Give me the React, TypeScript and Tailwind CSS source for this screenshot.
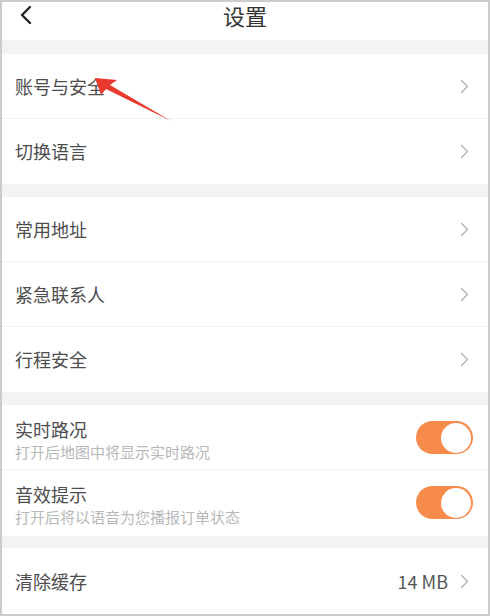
import React from 'react';

const font = { fontFamily: '"Noto Sans CJK SC", "Noto Sans", sans-serif' };

function Chevron() {
    return (
        <svg width="9" height="15" viewBox="0 0 9 15" className="shrink-0">
            <polyline points="1.5,1.5 7.5,7.5 1.5,13.5" fill="none" stroke="#adadad" strokeWidth="1.3" strokeLinecap="round" strokeLinejoin="round" />
        </svg>
    );
}

function Toggle() {
    return (
        <div className="w-[57px] h-[33px] rounded-full bg-[#f68b4c] flex items-center justify-end pr-[2px] shrink-0">
            <div className="w-[30px] h-[30px] rounded-full bg-white" />
        </div>
    );
}

function LinkRow({ label, value, last }: { label: string; value?: string; last?: boolean }) {
    return (
        <div className={`h-[65px] flex items-center pl-[13px] pr-[19px] bg-white ${last ? '' : 'border-b border-[#f1f1f1]'}`}>
            <span className="flex-1 text-[18px] text-[#4d4d4d]">{label}</span>
            {value && <span className="text-[18px] text-[#555] mr-[12px]">{value}</span>}
            <Chevron />
        </div>
    );
}

function ToggleRow({ title, desc, last }: { title: string; desc: string; last?: boolean }) {
    return (
        <div className={`flex items-start pl-[13px] pr-[15px] bg-white ${last ? 'h-[66px]' : 'h-[65px] border-b border-[#f1f1f1]'}`}>
            <div className="flex-1 pt-[12px]">
                <div className="text-[18px] leading-6 text-[#4d4d4d]">{title}</div>
                <div className="text-[15px] leading-5 mt-[1px] text-[#b8b8b8]">{desc}</div>
            </div>
            <div className="pt-[16px]">
                <Toggle />
            </div>
        </div>
    );
}

export default function App() {
    return (
        <div className="relative w-[490px] h-[616px] border-2 border-[#cccccc] bg-[#f2f3f5] overflow-hidden" style={font}>
            <div className="h-[38px] bg-white relative flex justify-center">
                <svg width="16" height="20" viewBox="0 0 16 20" className="absolute left-[17px] top-[3px]">
                    <polyline points="11,2 3,10 11,18" fill="none" stroke="#222" strokeWidth="2.4" strokeLinecap="round" strokeLinejoin="round" />
                </svg>
                <span className="text-[22px] leading-[26px] text-[#333]">设置</span>
            </div>

            <div className="h-[14px]" />
            <LinkRow label="账号与安全" />
            <LinkRow label="切换语言" last />

            <div className="h-[13px]" />
            <LinkRow label="常用地址" />
            <LinkRow label="紧急联系人" />
            <LinkRow label="行程安全" last />

            <div className="h-[13px]" />
            <ToggleRow title="实时路况" desc="打开后地图中将显示实时路况" />
            <ToggleRow title="音效提示" desc="打开后将以语音为您播报订单状态" last />

            <div className="h-[12px]" />
            <div className="h-[66px] flex items-center pl-[13px] pr-[19px] bg-white">
                <span className="flex-1 text-[18px] text-[#4d4d4d]">清除缓存</span>
                <span className="text-[18px] text-[#555] mr-[12px]">14 MB</span>
                <Chevron />
            </div>

            {/* red annotation arrow */}
            <svg width="490" height="616" className="absolute left-[-2px] top-[-2px] pointer-events-none">
                <polygon points="95,78 117,80 110,85 171,121 106,89 101,95" fill="#ea3a30" />
            </svg>
        </div>
    );
}
